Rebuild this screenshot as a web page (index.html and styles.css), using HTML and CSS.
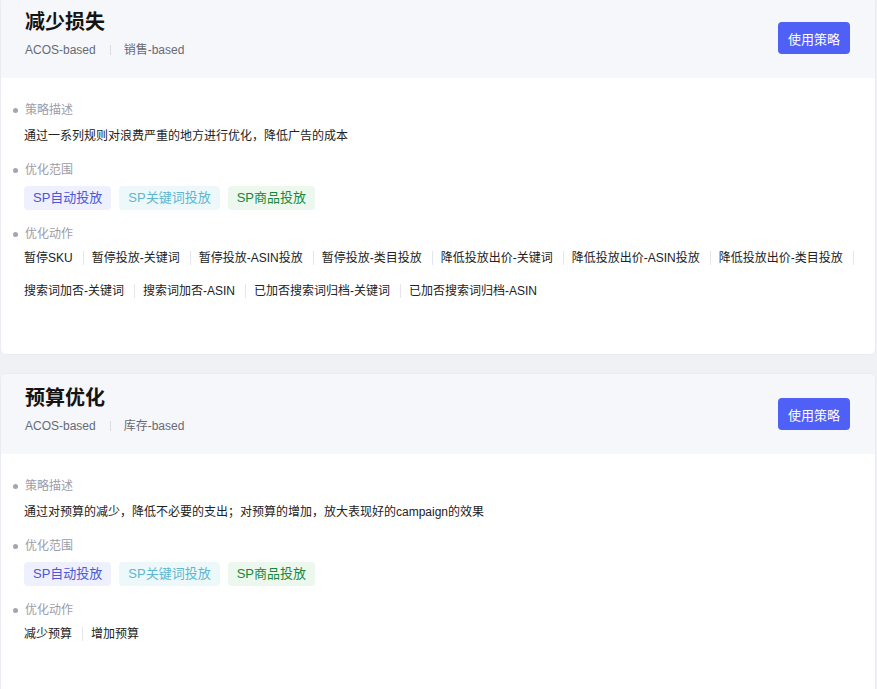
FILE: index.html
```html
<!DOCTYPE html>
<html lang="zh-CN">
<head>
<meta charset="utf-8">
<title>策略</title>
<link rel="stylesheet" href="styles.css">
</head>
<body>
<div class="list">
  <div class="card">
    <div class="card-head">
      <div class="head-info">
        <div class="title">减少损失</div>
        <div class="basis"><span>ACOS-based</span><span class="sep"></span><span>销售-based</span></div>
      </div>
      <button class="btn">使用策略</button>
    </div>
    <div class="card-body">
      <div class="label">策略描述</div>
      <div class="desc">通过一系列规则对浪费严重的地方进行优化，降低广告的成本</div>
      <div class="label label-gap">优化范围</div>
      <div class="tags">
        <span class="tag tag-auto">SP自动投放</span>
        <span class="tag tag-kw">SP关键词投放</span>
        <span class="tag tag-prod">SP商品投放</span>
      </div>
      <div class="label label-gap2">优化动作</div>
      <div class="actions">
        <span class="act">暂停SKU</span>
        <span class="act">暂停投放-关键词</span>
        <span class="act">暂停投放-ASIN投放</span>
        <span class="act">暂停投放-类目投放</span>
        <span class="act">降低投放出价-关键词</span>
        <span class="act">降低投放出价-ASIN投放</span>
        <span class="act">降低投放出价-类目投放</span>
        <span class="act">搜索词加否-关键词</span>
        <span class="act">搜索词加否-ASIN</span>
        <span class="act">已加否搜索词归档-关键词</span>
        <span class="act">已加否搜索词归档-ASIN</span>
      </div>
    </div>
  </div>
  <div class="card">
    <div class="card-head">
      <div class="head-info">
        <div class="title">预算优化</div>
        <div class="basis"><span>ACOS-based</span><span class="sep"></span><span>库存-based</span></div>
      </div>
      <button class="btn">使用策略</button>
    </div>
    <div class="card-body">
      <div class="label">策略描述</div>
      <div class="desc">通过对预算的减少，降低不必要的支出；对预算的增加，放大表现好的campaign的效果</div>
      <div class="label label-gap">优化范围</div>
      <div class="tags">
        <span class="tag tag-auto">SP自动投放</span>
        <span class="tag tag-kw">SP关键词投放</span>
        <span class="tag tag-prod">SP商品投放</span>
      </div>
      <div class="label label-gap2">优化动作</div>
      <div class="actions">
        <span class="act">减少预算</span>
        <span class="act">增加预算</span>
      </div>
    </div>
  </div>
</div>
</body>
</html>
```
FILE: styles.css
```css
* { box-sizing: border-box; }
html, body {
  margin: 0;
  padding: 0;
  background: #f0f1f5;
  font-family: "Liberation Sans", "Noto Sans CJK SC", sans-serif;
}
.list {
  display: flex;
  flex-direction: column;
  gap: 18px;
  margin-top: -3px;
  padding-right: 1px;
}
.card {
  background: #fff;
  border: 1px solid #eaecf1;
  border-radius: 6px;
  overflow: hidden;
}
.card-head {
  height: 80px;
  background: #f6f7fb;
  display: flex;
  justify-content: space-between;
  align-items: flex-start;
  padding: 10px 25px 0 24px;
}
.title {
  font-size: 20px;
  font-weight: bold;
  line-height: 28px;
  color: #141414;
}
.basis {
  margin-top: 4px;
  display: flex;
  align-items: center;
  font-size: 12px;
  line-height: 20px;
  color: #676a74;
}
.sep {
  width: 1px;
  height: 10px;
  background: #dcdde3;
  margin: 0 13px 0 14px;
}
.btn {
  align-self: center;
  margin-top: -10px;
  width: 72px;
  height: 32px;
  border: none;
  border-radius: 4px;
  background: #4f60f6;
  color: #fff;
  font-family: inherit;
  font-size: 13px;
  padding: 0;
}
.card-body {
  padding: 22px 12px 53px 23px;
}
.label {
  display: flex;
  align-items: center;
  font-size: 12px;
  line-height: 20px;
  color: #9c9ca6;
}
.label::before {
  content: "";
  width: 5px;
  height: 5px;
  border-radius: 50%;
  background: #a4a5b0;
  margin-left: -11px;
  margin-right: 7px;
}
.desc {
  margin-top: 6px;
  font-size: 12px;
  line-height: 20px;
  color: #222;
}
.label-gap { margin-top: 14px; }
.label-gap2 { margin-top: 14px; }
.tags {
  margin-top: 6px;
  display: flex;
  gap: 8px;
}
.tag {
  height: 24px;
  line-height: 24px;
  padding: 0 9px;
  border-radius: 4px;
  font-size: 13px;
}
.tag-auto { background: #eef0fd; color: #4c57d8; }
.tag-kw { background: #edf8fb; color: #5bb7d0; }
.tag-prod { background: #ecf8ee; color: #17893b; }
.actions {
  margin-top: 4px;
  display: flex;
  flex-wrap: wrap;
  row-gap: 13px;
}
.act {
  display: inline-flex;
  align-items: center;
  font-size: 12px;
  line-height: 20px;
  color: #222;
}
.act::after {
  content: "";
  width: 1px;
  height: 14px;
  background: #e5e6eb;
  margin: 0 8px 0 10px;
}
.act:last-child::after { display: none; }
```
